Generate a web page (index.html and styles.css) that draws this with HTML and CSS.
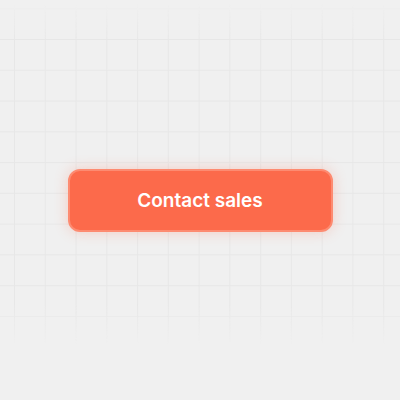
FILE: index.html
```html
<!DOCTYPE html>
<html lang="en">
<head>
<meta charset="utf-8">
<title>Contact sales</title>
<link rel="stylesheet" href="styles.css">
</head>
<body>
<div class="grid-bg"></div>
<main class="stage">
  <button class="cta" type="button">Contact sales</button>
</main>
</body>
</html>
```
FILE: styles.css
```css
html, body {
  margin: 0;
  height: 100%;
}

body {
  background: #f0f0f0;
  font-family: Inter, "Noto Sans", sans-serif;
  position: relative;
  overflow: hidden;
}

/* faint blueprint grid, fading out toward the top and bottom */
.grid-bg {
  position: absolute;
  inset: 0;
  background-image:
    linear-gradient(to right, #e7e7e7 1px, transparent 1px),
    linear-gradient(to bottom, #e7e7e7 1px, transparent 1px);
  background-size: 30.77px 30.77px;
  background-position: 14px 39px;
  -webkit-mask-image: linear-gradient(to bottom, transparent 1%, #000 10%, #000 76%, transparent 86%);
  mask-image: linear-gradient(to bottom, transparent 1%, #000 10%, #000 76%, transparent 86%);
}

.stage {
  position: relative;
  height: 100%;
  display: flex;
  align-items: center;
  justify-content: center;
}

.cta {
  box-sizing: border-box;
  width: 265px;
  height: 63px;
  border: 2px solid #fd8b71;
  border-radius: 12px;
  background: #fc6a4b;
  color: #fff;
  font-family: Inter, "Noto Sans", sans-serif;
  font-size: 19px;
  font-weight: 600;
  letter-spacing: 0;
  box-shadow: 0 0 14px rgba(252, 106, 75, 0.28);
  cursor: pointer;
}
```
